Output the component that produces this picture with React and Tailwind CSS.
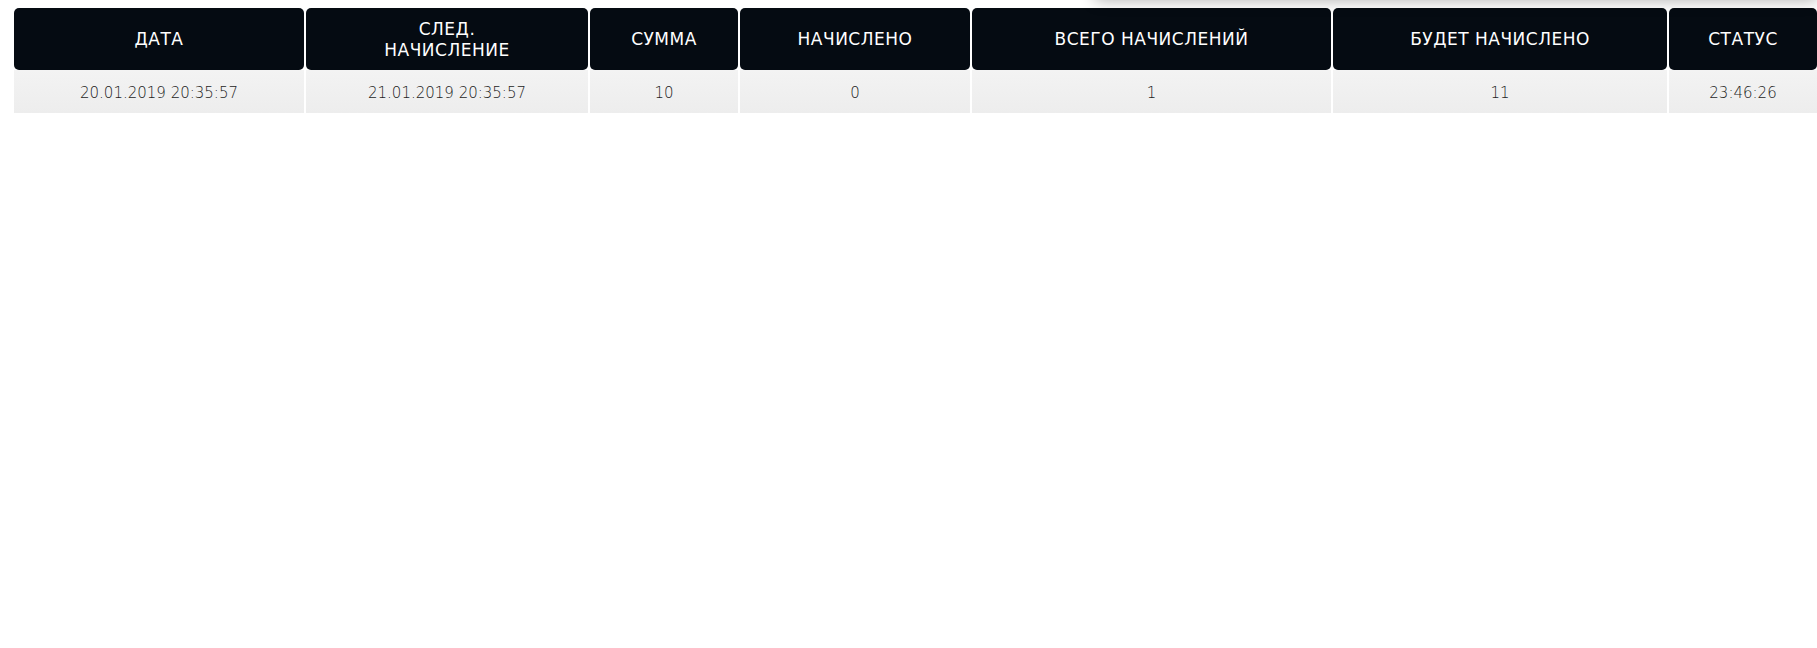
const COLUMNS = [
  { key: 'date', title: ['ДАТА'] },
  { key: 'next', title: ['СЛЕД.', 'НАЧИСЛЕНИЕ'] },
  { key: 'sum', title: ['СУММА'] },
  { key: 'accrued', title: ['НАЧИСЛЕНО'] },
  { key: 'total', title: ['ВСЕГО НАЧИСЛЕНИЙ'] },
  { key: 'will', title: ['БУДЕТ НАЧИСЛЕНО'] },
  { key: 'status', title: ['СТАТУС'] },
];

const ROWS = [
  {
    date: '20.01.2019 20:35:57',
    next: '21.01.2019 20:35:57',
    sum: '10',
    accrued: '0',
    total: '1',
    will: '11',
    status: '23:46:26',
  },
];

export default function App() {
  return (
    <div className="relative min-h-[648px] overflow-hidden bg-white font-['DejaVu_Sans',sans-serif]">
      {/* shadow of a panel sitting above the viewport */}
      <div className="absolute left-[1095px] right-0 top-[-40px] h-[40px] bg-white shadow-[0_0_16px_rgba(0,0,0,0.32)]" />

      <div className="pl-[14px] pt-[8px]">
        <div className="grid grid-cols-[290px_282px_148px_230px_359px_334px_148px] gap-x-[2px]">
          {COLUMNS.map((col) => (
            <div
              key={col.key}
              className="flex h-[62px] flex-col items-center justify-center rounded-[5px] bg-[#050b12] pt-[1px] text-center text-[17px] leading-[21px] tracking-[0.5px] text-white"
            >
              {col.title.map((line) => (
                <span key={line}>{line}</span>
              ))}
            </div>
          ))}
          {ROWS.map((row, i) =>
            COLUMNS.map((col) => (
              <div
                key={`${i}-${col.key}`}
                className="flex h-[43px] items-center justify-center bg-gradient-to-b from-[#f3f3f3] to-[#ededed] pt-[3px] text-[15px] font-extralight text-[#1c1c1c]"
              >
                {row[col.key]}
              </div>
            ))
          )}
        </div>
      </div>
    </div>
  );
}
